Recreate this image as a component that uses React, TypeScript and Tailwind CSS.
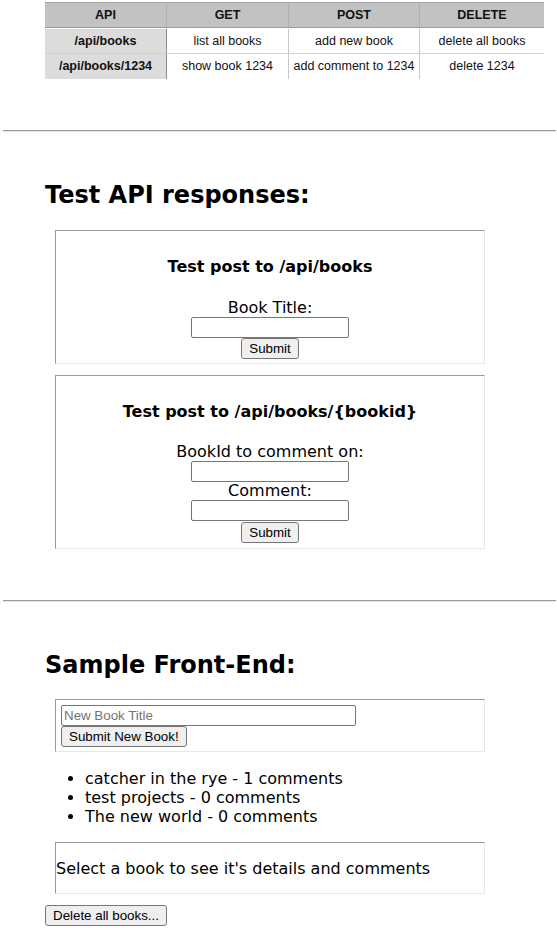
import React from "react";

const btn =
  "block h-[21px] rounded-[3px] border border-[#767676] bg-[#efefef] px-[7px] text-[13.33px] leading-[15px] font-['Liberation_Sans',Arial,sans-serif] text-black";
const inp =
  "block h-[21px] rounded-[2px] border border-[#767676] bg-white px-[2px] text-[13.33px] font-['Liberation_Sans',Arial,sans-serif] text-black placeholder:text-[#757575] outline-none";
const box =
  "ml-[10px] w-[430px] border border-t-[#9a9a9a] border-l-[#9a9a9a] border-b-[#e8e8e8] border-r-[#e8e8e8]";

function Cell({
  children,
  className = "",
}: {
  children: React.ReactNode;
  className?: string;
}) {
  return (
    <div className={"flex items-center justify-center " + className}>
      {children}
    </div>
  );
}

function ApiTable() {
  return (
    <div className="ml-[45px] w-[499px] pt-[2px] font-['Liberation_Sans',Arial,sans-serif] text-[12.5px] text-[#111]">
      <div className="grid h-[25px] grid-cols-[122px_122px_131px_124px] border-t border-[#a6a6a6] bg-[#c2c2c2] font-bold">
        <Cell className="border-r border-[#b0b0b0]">API</Cell>
        <Cell className="border-r border-[#b0b0b0]">GET</Cell>
        <Cell className="border-r border-[#b0b0b0]">POST</Cell>
        <Cell>DELETE</Cell>
      </div>
      <div className="grid h-[26px] grid-cols-[122px_122px_131px_124px] border-t border-[#9a9a9a] pt-[1px]">
        <Cell className="border-r border-[#8c8c8c] bg-[#dcdcdc] font-bold">/api/books</Cell>
        <Cell className="border-r border-[#c8c8c8]">list all books</Cell>
        <Cell className="border-r border-[#c8c8c8]">add new book</Cell>
        <Cell>delete all books</Cell>
      </div>
      <div className="grid h-[26px] grid-cols-[122px_122px_131px_124px] border-t border-[#cfcfcf]">
        <Cell className="border-r border-[#8c8c8c] bg-[#dcdcdc] font-bold">/api/books/1234</Cell>
        <Cell className="border-r border-[#c8c8c8]">show book 1234</Cell>
        <Cell className="border-r border-[#c8c8c8]">add comment to 1234</Cell>
        <Cell>delete 1234</Cell>
      </div>
    </div>
  );
}

function Rule({ className = "" }: { className?: string }) {
  return (
    <div
      className={
        "ml-[3px] w-[553px] border-t border-b border-t-[#9a9a9a] border-b-[#e6e6e6] " +
        className
      }
    />
  );
}

export default function App() {
  return (
    <div className="min-h-[930px] bg-white text-[16px] text-black font-['DejaVu_Sans','Noto_Sans',sans-serif]">
      <ApiTable />

      <Rule className="mt-[51px]" />

      <div className="pl-[45px]">
        <h2 className="mt-[49px] text-[24px] font-bold leading-[28px]">
          Test API responses:
        </h2>

        <form
          className={box + " mt-[21px] pt-[27px] pb-[4px] text-center"}
          onSubmit={(e) => e.preventDefault()}
        >
          <h4 className="font-bold leading-[18px]">Test post to /api/books</h4>
          <div className="mt-[23px] leading-[18px]">Book Title:</div>
          <input type="text" className={inp + " mx-auto w-[158px]"} />
          <button type="submit" className={btn + " mx-auto"}>
            Submit
          </button>
        </form>

        <form
          className={box + " mt-[11px] pt-[27px] pb-[5px] text-center"}
          onSubmit={(e) => e.preventDefault()}
        >
          <h4 className="font-bold leading-[18px]">
            Test post to /api/books/{"{bookid}"}
          </h4>
          <div className="mt-[22px] leading-[18px]">BookId to comment on:</div>
          <input type="text" className={inp + " mx-auto w-[158px]"} />
          <div className="leading-[18px]">Comment:</div>
          <input type="text" className={inp + " mx-auto w-[158px]"} />
          <button type="submit" className={btn + " mx-auto mt-[1px]"}>
            Submit
          </button>
        </form>
      </div>

      <Rule className="mt-[51px]" />

      <div className="pl-[45px]">
        <h2 className="mt-[49px] text-[24px] font-bold leading-[28px]">
          Sample Front-End:
        </h2>

        <form
          className={box + " mt-[20px] px-[5px] pt-[5px] pb-[4px]"}
          onSubmit={(e) => e.preventDefault()}
        >
          <input
            type="text"
            placeholder="New Book Title"
            className={inp + " w-[295px]"}
          />
          <button type="submit" className={btn}>
            Submit New Book!
          </button>
        </form>

        <ul className="mt-[17px] list-disc pl-[40px] leading-[19px]">
          <li>catcher in the rye - 1 comments</li>
          <li>test projects - 0 comments</li>
          <li>The new world - 0 comments</li>
        </ul>

        <div className={box + " mt-[16px] pt-[17px] pb-[15px] leading-[18px]"}>
          Select a book to see it's details and comments
        </div>

        <button type="button" className={btn + " mt-[11px] h-[20px]"}>
          Delete all books...
        </button>
      </div>
    </div>
  );
}
